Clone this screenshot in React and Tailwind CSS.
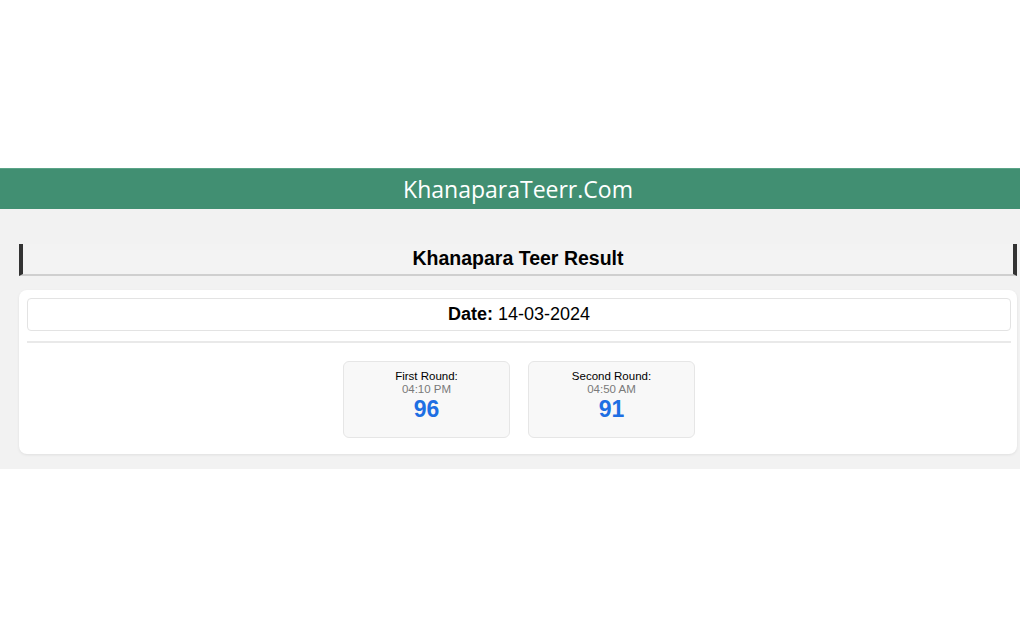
import React from 'react';

const rounds = [
  { label: 'First Round:', time: '04:10 PM', value: '96' },
  { label: 'Second Round:', time: '04:50 AM', value: '91' },
];

export default function App() {
  return (
    <div className="w-[1020px] h-[638px] bg-white overflow-hidden" style={{ fontFamily: '"Liberation Sans", Arial, sans-serif' }}>
      <div className="h-[168px]" />

      {/* site header */}
      <div
        className="h-[41px] bg-[#418f72] text-white text-[23px] flex items-center justify-center pl-[16px] border-t border-[#5aa487]"
        style={{ fontFamily: '"Open Sans", "DejaVu Sans", sans-serif' }}
      >
        KhanaparaTeerr.Com
      </div>

      <div className="bg-[#f2f2f2] pl-[19px] pr-[3px] pt-[35px] pb-[15px]">
        <div className="h-[32px] bg-[#f3f3f3] border-l-4 border-r-4 border-[#333] border-b-2 border-b-[#cfcfcf] flex items-center justify-center">
          <h1 className="text-[19.5px] font-bold text-black">Khanapara Teer Result</h1>
        </div>

        <div className="mt-[14px] bg-white rounded-lg shadow-[0_1px_3px_rgba(0,0,0,0.08)] pt-2 pl-2 pr-[6px] pb-4">
          <div className="h-[33px] border border-[#e3e3e3] rounded flex items-center justify-center text-[18px] text-black">
            <span className="font-bold mr-[5px]">Date:</span>
            <span>14-03-2024</span>
          </div>

          <div className="mt-[10px] border-t-2 border-[#e9e9e9]" />

          <div className="mt-[18px] flex justify-center gap-[18px]">
            {rounds.map((r) => (
              <div key={r.label} className="w-[167px] h-[77px] bg-[#f8f8f8] border border-[#e6e6e6] rounded-md flex flex-col items-center pt-[8px]">
                <div className="text-[11.5px] leading-[13px] text-black">{r.label}</div>
                <div className="text-[11.5px] leading-[13px] text-[#7a7a7a]">{r.time}</div>
                <div className="text-[23px] leading-[26px] font-bold text-[#1e6fe3]">{r.value}</div>
              </div>
            ))}
          </div>
        </div>
      </div>
    </div>
  );
}
